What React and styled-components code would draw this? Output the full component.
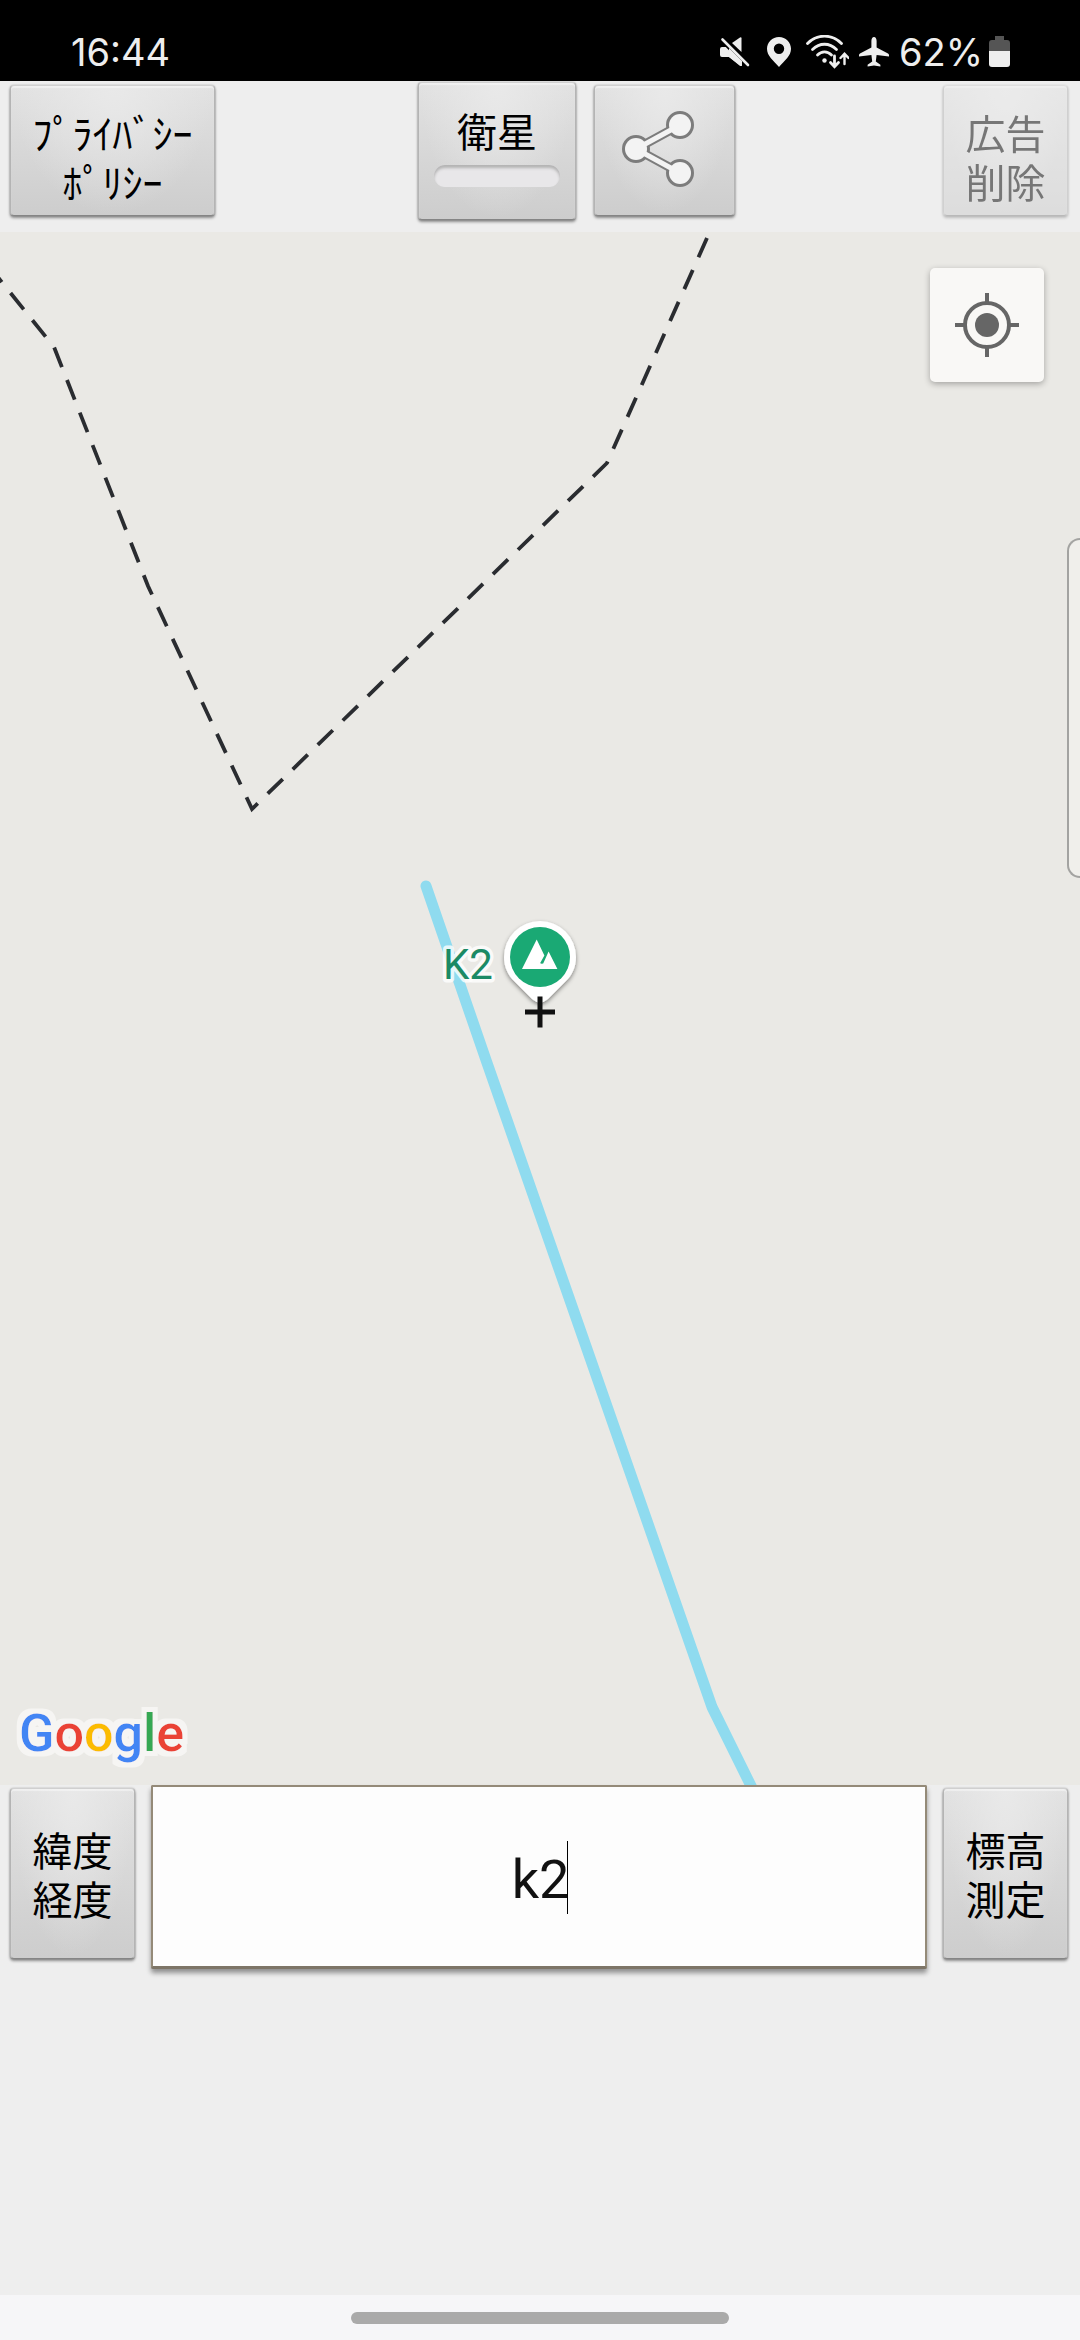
import { createGlobalStyle, styled } from 'styled-components';

const GlobalStyle = createGlobalStyle`
  * {
    box-sizing: border-box;
  }

  body {
    margin: 0;
    background-color: #eeeeee;
    font-family: Roboto, "Noto Sans CJK JP", sans-serif;
  }
`;

const Screen = styled.div`
  display: flex;
  flex-direction: column;
  min-height: 100vh;
  position: relative;
`;

const StatusBar = styled.header`
  display: flex;
  align-items: center;
  justify-content: space-between;
  height: 81px;
  padding: 22px 70px 0 71px;
  background-color: #000000;
  color: #eeeeee;
  font-family: Inter, sans-serif;
  font-size: 38px;
  line-height: 48px;
`;

const StatusIcons = styled.div`
  display: flex;
  align-items: center;
  gap: 6px;

  svg {
    display: block;
  }
`;

const BatteryLevel = styled.span`
  padding-left: 4px;
`;

const Toolbar = styled.nav`
  display: flex;
  align-items: flex-start;
  justify-content: space-between;
  height: 151px;
  padding: 1px 12px 0 10px;
`;

const ToolGroup = styled.div`
  display: flex;
  align-items: flex-start;
  gap: 18px;
  padding-right: 5px;
`;

const Button = styled.button`
  display: flex;
  flex-direction: column;
  align-items: center;
  justify-content: center;
  flex: none;
  width: ${(props) => props.$width}px;
  height: ${(props) => props.$height}px;
  margin: 3px 0 0;
  padding: 0;
  border: 1px solid #b4b4b4;
  border-top-color: #d0d0d0;
  border-bottom-color: #858585;
  border-radius: 4px;
  background-image: radial-gradient(ellipse at 50% 0%, #e9e9e9 0%, rgba(233, 233, 233, 0) 70%),
    linear-gradient(#e2e2e2, #cdcdcd);
  box-shadow: 0 2px 3px rgba(0, 0, 0, 0.4), 0 0 2px rgba(0, 0, 0, 0.25),
    inset 0 2px 1px rgba(255, 255, 255, 0.45);
  color: #000000;
  font-family: "Noto Sans CJK JP", sans-serif;
  font-size: 40px;
  line-height: 49px;

  &:disabled {
    opacity: 0.5;
  }
`;

const ToolButton = styled(Button)`
  padding-top: 12px;
`;

const ToggleButton = styled(Button)`
  margin-top: 0;
  padding-bottom: 10px;
`;

const ToggleSlot = styled.span`
  width: 126px;
  height: 22px;
  margin-top: 10px;
  border-radius: 11px;
  background-color: #e8e7e9;
  box-shadow: inset 0 3px 3px #b3b3b3;
`;

const MapArea = styled.main`
  position: relative;
  flex: 1;
  min-height: 600px;
  overflow: hidden;
  background-color: #eae9e5;
`;

const MapDrawing = styled.svg`
  position: absolute;
  inset: 0;
  width: 100%;
  height: 100%;
`;

const PlaceName = styled.text`
  fill: #1b8a65;
  stroke: rgba(255, 255, 255, 0.8);
  stroke-width: 7px;
  stroke-linejoin: round;
  paint-order: stroke;
  font-family: Roboto, sans-serif;
  font-size: 42px;
`;

const Logo = styled.svg`
  position: absolute;
  left: 12px;
  bottom: 12px;
  width: 190px;
  height: 76px;

  text {
    font-family: Roboto, sans-serif;
    font-size: 52px;
    font-weight: 500;
  }
`;

const LocateButton = styled.button`
  position: absolute;
  top: 36px;
  right: 36px;
  display: flex;
  align-items: center;
  justify-content: center;
  width: 114px;
  height: 114px;
  padding: 0;
  border: 0;
  border-radius: 5px;
  background-color: #f9f8f6;
  box-shadow: 0 2px 6px rgba(0, 0, 0, 0.3);
`;

const EdgeHandle = styled.div`
  position: absolute;
  top: 538px;
  right: 0;
  width: 13px;
  height: 340px;
  border: 2px solid #a3a3a1;
  border-right: 0;
  border-radius: 13px 0 0 13px;
  background-color: #f0efeb;
`;

const SearchPanel = styled.footer`
  display: flex;
  align-items: flex-start;
  gap: 16px;
  min-height: 510px;
  padding: 0 12px 0 10px;
  background-color: #eeeeee;
`;

const SearchField = styled.label`
  position: relative;
  flex: 1;
  min-width: 0;
`;

const SearchInput = styled.input`
  display: block;
  width: 100%;
  height: 184px;
  padding: 6px 0 0 3px;
  border: 2px solid #948a78;
  border-bottom: 3px solid #7d7567;
  border-radius: 2px;
  outline: 0;
  background-color: #fdfdfd;
  box-shadow: 0 4px 5px rgba(0, 0, 0, 0.4);
  caret-color: transparent;
  color: #111111;
  font-family: Roboto, sans-serif;
  font-size: 54px;
  text-align: center;
`;

const Caret = styled.span`
  position: absolute;
  top: 56px;
  left: calc(50% + 28px);
  width: 1px;
  height: 73px;
  background-color: #000000;
`;

const GestureBar = styled.div`
  display: flex;
  justify-content: center;
  height: 45px;
  padding-top: 17px;
  background-color: #f6f6f8;
`;

const GesturePill = styled.div`
  width: 35%;
  height: 12px;
  border-radius: 6px;
  background-color: #aaaaaa;
`;

const MutedIcon = () => (
  <svg width="30" height="30" viewBox="0 0 30 30" fill="#eee">
    <path d="M2 10h6l13 13v5.500q0 1-1.200.2L9 20H2q-2 0-2-2v-6q0-2 2-2z" />
    <path d="M12 6l8-5.600q1.500-.8 1.500.8V15z" />
    <path d="M2 2l26 26" stroke="#000" strokeWidth="6" />
    <path d="M9 11l13 13v4.500q0 1-1.200.2L9 20z" />
    <path d="M2.500 2.500l25.500 25.500" stroke="#eee" strokeWidth="2.600" strokeLinecap="round" />
  </svg>
);

const PinIcon = () => (
  <svg width="44" height="30" viewBox="-3 0 44 30" fill="#eee">
    <path
      fillRule="evenodd"
      d="M20 0c6.800 0 12 5.200 12 11.800C32 19 26 23 20 30 14 23 8 19 8 11.800 8 5.200 13.200 0 20 0zm0 6.500a5.200 5.200 0 1 0 0 10.400 5.200 5.200 0 0 0 0-10.400z"
    />
  </svg>
);

const WifiIcon = () => (
  <svg width="43" height="34" viewBox="0 0 43 34" fill="none" stroke="#eee" strokeWidth="2.800" strokeLinecap="round">
    <path d="M1.500 8.500C11-1.300 26-1.300 35.500 8.500" />
    <path d="M6.500 14.500c7-7 17-7 24 0" />
    <path d="M11.500 20c4-4.200 10-4.200 14 0" />
    <circle cx="18.500" cy="25.500" r="2.200" fill="#eee" stroke="none" />
    <path d="M28.500 21v10.500m-4-4l4 4.200 4-4.200" />
    <path d="M38.500 29V19m-4 4l4-4.200 4 4.200" strokeWidth="2.400" />
  </svg>
);

const PlaneIcon = () => (
  <svg width="34" height="30" viewBox="-4 0 34 30" fill="#eee">
    <path d="M15 0c1.700 0 2.600 1.800 2.600 4v6.500L29 16.500q1 .6 1 1.500v1.500l-12.400-1.600-.8 6.600 4.600 3.200v1.800L15 28.500l-6.400 1v-1.800l4.600-3.200-.8-6.600L0 19.500V18q0-.9 1-1.500l11.400-6V4C12.400 1.800 13.300 0 15 0z" />
  </svg>
);

const BatteryIcon = () => (
  <svg width="21" height="31" viewBox="0 0 21 31">
    <path d="M6 0h9v4h3q3 0 3 3v9H0V7q0-3 3-3h3z" fill="#555" />
    <path d="M0 15h21v13q0 3-3 3H3q-3 0-3-3z" fill="#eee" />
  </svg>
);

const ShareIcon = () => (
  <svg width="96" height="96" viewBox="0 0 96 96">
    <g fill="none" stroke="#7c7c7c">
      <path d="M63 22L19 46l44 24" strokeWidth="9" />
      <circle cx="19" cy="46" r="10" strokeWidth="8" />
      <circle cx="63" cy="22" r="10" strokeWidth="8" />
      <circle cx="63" cy="70" r="10" strokeWidth="8" />
    </g>
    <g fill="#f3f3f3">
      <path d="M63 22L19 46l44 24" fill="none" stroke="#f3f3f3" strokeWidth="5" />
      <circle cx="19" cy="46" r="11" />
      <circle cx="63" cy="22" r="11" />
      <circle cx="63" cy="70" r="11" />
    </g>
  </svg>
);

const LocateIcon = () => (
  <svg width="64" height="64" viewBox="0 0 64 64" fill="none" stroke="#666" strokeWidth="4">
    <circle cx="32" cy="32" r="22" />
    <circle cx="32" cy="32" r="12" fill="#666" stroke="none" />
    <path d="M32 0v9M32 55v9M0 32h9M55 32h9" />
  </svg>
);

const logoLetters = [
  ['G', '#4285f4'],
  ['o', '#ea4335'],
  ['o', '#fbbc05'],
  ['g', '#4285f4'],
  ['l', '#34a853'],
  ['e', '#ea4335'],
];

function GoogleLogo() {
  return (
    <Logo viewBox="0 0 190 76">
      <defs>
        <filter id="logoHalo" x="-10%" y="-20%" width="120%" height="140%">
          <feMorphology in="SourceAlpha" operator="dilate" radius="5" result="wide" />
          <feFlood floodColor="#f6f5f3" />
          <feComposite in2="wide" operator="in" result="halo" />
          <feMerge>
            <feMergeNode in="halo" />
            <feMergeNode in="SourceGraphic" />
          </feMerge>
        </filter>
      </defs>
      <text x="7" y="54" filter="url(#logoHalo)">
        {logoLetters.map(([letter, color], index) => (
          <tspan key={index} fill={color}>{letter}</tspan>
        ))}
      </text>
    </Logo>
  );
}

function MapLayer() {
  return (
    <MapDrawing viewBox="0 0 1080 1553" preserveAspectRatio="xMidYMid slice">
      <defs>
        <filter id="pinShadow" x="-30%" y="-30%" width="160%" height="160%">
          <feDropShadow dx="0" dy="2" stdDeviation="2" floodOpacity="0.45" />
        </filter>
      </defs>
      {/* border line */}
      <path
        d="M707 6L607 231 252 577 148 354 54 115-20 23"
        fill="none"
        stroke="#2a2c30"
        strokeWidth="3.800"
        strokeDasharray="21 13.950"
      />
      {/* river */}
      <path
        d="M426 654L486 828 712 1475 755 1562"
        fill="none"
        stroke="#8fdbef"
        strokeWidth="11"
        strokeLinecap="round"
        strokeLinejoin="round"
      />
      <PlaceName x="443" y="747">K2</PlaceName>
      <path
        d="M540 689a36 36 0 0 1 36 36c0 10-4 18-10 24l-18 18q-8 7-16 0l-18-18c-6-6-10-14-10-24a36 36 0 0 1 36-36z"
        fill="#fff"
        filter="url(#pinShadow)"
      />
      <circle cx="540" cy="725" r="30" fill="#1aa974" />
      <path d="M522 737l14.700-29.500 7.700 16-4.200 7.500q.3 1 3 .6l5.400-12 8.800 17.400z" fill="#fff" />
      <path d="M540 764.500v31M525 780h30" stroke="#111" strokeWidth="5" />
    </MapDrawing>
  );
}

function App() {
  return (
    <>
      <GlobalStyle />
      <Screen>
        <StatusBar>
          <span>16:44</span>
          <StatusIcons>
            <MutedIcon />
            <PinIcon />
            <WifiIcon />
            <PlaneIcon />
            <BatteryLevel>62%</BatteryLevel>
            <BatteryIcon />
          </StatusIcons>
        </StatusBar>
        <Toolbar>
          <ToolButton type="button" $width={205} $height={131}>
            <span>ﾌﾟﾗｲﾊﾞｼｰ</span>
            <span>ﾎﾟﾘｼｰ</span>
          </ToolButton>
          <ToolGroup>
            <ToggleButton type="button" $width={158} $height={138} aria-pressed="false">
              <span>衛星</span>
              <ToggleSlot />
            </ToggleButton>
            <Button type="button" $width={141} $height={131} aria-label="共有">
              <ShareIcon />
            </Button>
          </ToolGroup>
          <ToolButton type="button" $width={125} $height={131} disabled>
            <span>広告</span>
            <span>削除</span>
          </ToolButton>
        </Toolbar>
        <MapArea>
          <MapLayer />
          <LocateButton type="button" aria-label="現在地">
            <LocateIcon />
          </LocateButton>
          <GoogleLogo />
        </MapArea>
        <SearchPanel>
          <Button type="button" $width={125} $height={171}>
            <span>緯度</span>
            <span>経度</span>
          </Button>
          <SearchField>
            <SearchInput type="text" defaultValue="k2" aria-label="検索" />
            <Caret />
          </SearchField>
          <Button type="button" $width={125} $height={171}>
            <span>標高</span>
            <span>測定</span>
          </Button>
        </SearchPanel>
        <GestureBar>
          <GesturePill />
        </GestureBar>
        <EdgeHandle />
      </Screen>
    </>
  );
}

export default App;
